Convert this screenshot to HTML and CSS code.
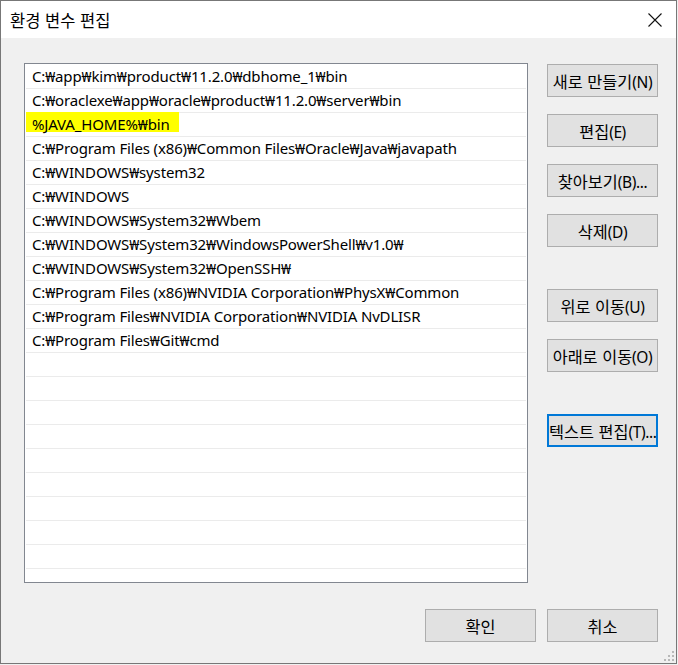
FILE: index.html
```html
<!DOCTYPE html>
<html lang="ko">
<head>
<meta charset="utf-8">
<title>환경 변수 편집</title>
<link rel="stylesheet" href="styles.css">
</head>
<body>
<div class="window">
  <div class="titlebar">
    <span class="title">환경 변수 편집</span>
    <svg class="close" width="14" height="14" viewBox="0 0 14 14"><path d="M0.5 0.5 L13.5 13.5 M13.5 0.5 L0.5 13.5" stroke="#111" stroke-width="1.1" fill="none"/></svg>
  </div>
  <div class="content">
    <div class="main">
      <div class="list">
        <div class="row"><span class="cell">C:₩app₩kim₩product₩11.2.0₩dbhome_1₩bin</span></div>
        <div class="row"><span class="cell">C:₩oraclexe₩app₩oracle₩product₩11.2.0₩server₩bin</span></div>
        <div class="row"><span class="cell hl">%JAVA_HOME%₩bin</span></div>
        <div class="row"><span class="cell">C:₩Program Files (x86)₩Common Files₩Oracle₩Java₩javapath</span></div>
        <div class="row"><span class="cell">C:₩WINDOWS₩system32</span></div>
        <div class="row"><span class="cell">C:₩WINDOWS</span></div>
        <div class="row"><span class="cell">C:₩WINDOWS₩System32₩Wbem</span></div>
        <div class="row"><span class="cell">C:₩WINDOWS₩System32₩WindowsPowerShell₩v1.0₩</span></div>
        <div class="row"><span class="cell">C:₩WINDOWS₩System32₩OpenSSH₩</span></div>
        <div class="row"><span class="cell">C:₩Program Files (x86)₩NVIDIA Corporation₩PhysX₩Common</span></div>
        <div class="row"><span class="cell">C:₩Program Files₩NVIDIA Corporation₩NVIDIA NvDLISR</span></div>
        <div class="row"><span class="cell">C:₩Program Files₩Git₩cmd</span></div>
        <div class="row"></div>
        <div class="row"></div>
        <div class="row"></div>
        <div class="row"></div>
        <div class="row"></div>
        <div class="row"></div>
        <div class="row"></div>
        <div class="row"></div>
        <div class="row"></div>
        <div class="row"></div>
      </div>
      <div class="side">
        <div class="group">
          <button class="btn"><span class="ko">새로 만들기</span>(N)</button>
          <button class="btn"><span class="ko">편집</span>(E)</button>
          <button class="btn"><span class="ko">찾아보기</span>(B)...</button>
          <button class="btn"><span class="ko">삭제</span>(D)</button>
        </div>
        <div class="group">
          <button class="btn"><span class="ko">위로 이동</span>(U)</button>
          <button class="btn"><span class="ko">아래로 이동</span>(O)</button>
        </div>
        <div class="group">
          <button class="btn focus"><span class="ko">텍스트 편집</span>(T)...</button>
        </div>
      </div>
    </div>
    <div class="footer">
      <button class="btn"><span class="ko">확인</span></button>
      <button class="btn"><span class="ko">취소</span></button>
    </div>
    <svg class="grip" width="14" height="14" viewBox="0 0 14 14">
      <rect x="10" y="2" width="2" height="2" fill="#b8b8b8"/>
      <rect x="6" y="6" width="2" height="2" fill="#b8b8b8"/>
      <rect x="10" y="6" width="2" height="2" fill="#b8b8b8"/>
      <rect x="2" y="10" width="2" height="2" fill="#b8b8b8"/>
      <rect x="6" y="10" width="2" height="2" fill="#b8b8b8"/>
      <rect x="10" y="10" width="2" height="2" fill="#b8b8b8"/>
    </svg>
  </div>
</div>
</body>
</html>
```
FILE: styles.css
```css
* { box-sizing: border-box; }
html, body { margin: 0; padding: 0; background: #f0f0f0; }
body {
  font-family: "Noto Sans", "Noto Sans CJK KR", sans-serif;
  font-size: 15px;
  color: #000;
}
.window {
  width: 677px;
  height: 664px;
  border: 1px solid #777;
  background: #f0f0f0;
  display: flex;
  flex-direction: column;
}
.titlebar {
  height: 37px;
  background: #fff;
  display: flex;
  align-items: center;
  justify-content: space-between;
  padding: 0 14px 0 9px;
  flex: none;
}
.title {
  font-family: "Noto Sans CJK KR", sans-serif;
  font-size: 16.5px;
  padding-top: 1px;
}
.close { display: block; }
.content {
  position: relative;
  flex: 1;
  padding: 25px 18px 0 23px;
  display: flex;
  flex-direction: column;
}
.main {
  display: flex;
  gap: 19px;
}
.list {
  width: 504px;
  height: 520px;
  border: 1px solid #828790;
  background: #fff;
  padding: 0 1px;
  overflow: hidden;
}
.row {
  height: 24px;
  border-top: 1px solid #ebebeb;
  display: flex;
  align-items: flex-start;
}
.row:first-child { border-top: none; }
.cell {
  display: block;
  height: 20px;
  line-height: 20px;
  padding: 0 5px 0 6px;
  white-space: nowrap;
  letter-spacing: -0.15px;
  margin-top: 1px;
}
.row:first-child .cell { margin-top: 2px; }
.cell.hl {
  background: #ffff00;
  margin-top: -1px;
  padding-top: 2px;
  padding-right: 9px;
}
.side {
  display: flex;
  flex-direction: column;
  gap: 42px;
  padding-top: 1px;
}
.group {
  display: flex;
  flex-direction: column;
  gap: 17px;
}
.btn {
  width: 111px;
  height: 33px;
  background: #e1e1e1;
  border: 1px solid #adadad;
  border-radius: 0;
  font-family: "Noto Sans", "Noto Sans CJK KR", sans-serif;
  font-size: 15.5px;
  letter-spacing: -0.4px;
  color: #000;
  padding: 0;
  margin: 0;
  white-space: nowrap;
  overflow: hidden;
}
.ko {
  font-family: "Noto Sans CJK KR", sans-serif;
  font-size: 16.3px;
  letter-spacing: 0;
}
.btn.focus {
  border: 2px solid #0078d7;
}
.footer {
  display: flex;
  justify-content: flex-end;
  gap: 11px;
  padding-top: 26px;
}
.grip {
  position: absolute;
  right: 0;
  bottom: 0;
}
```
